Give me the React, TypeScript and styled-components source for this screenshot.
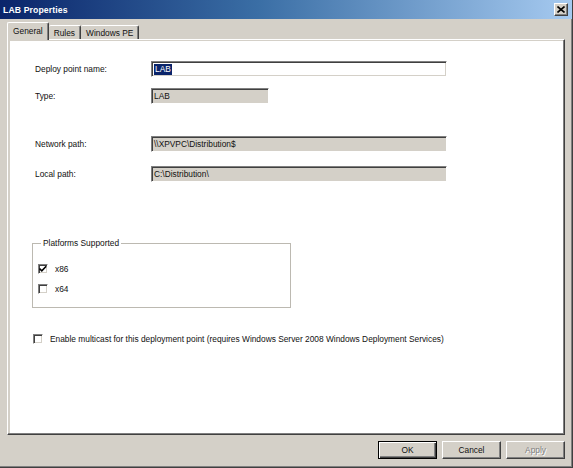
import React from "react";
import styled, { createGlobalStyle, css } from "styled-components";

const Global = createGlobalStyle`
  html, body { margin: 0; padding: 0; background: #D4D0C8; }
  body { font-family: "Liberation Sans", Arial, sans-serif; font-size: 8.35px; color: #111; }
  * { box-sizing: border-box; }
`;

const Window = styled.div`
  width: 573px;
  height: 468px;
  background: #D4D0C8;
  display: flex;
  flex-direction: column;
  border-right: 1px solid #404040;
  border-bottom: 1px solid #404040;
  box-shadow: inset -1px -1px 0 #808080;
`;

const TitleBar = styled.div`
  height: 19px;
  flex: none;
  display: flex;
  align-items: center;
  justify-content: space-between;
  padding: 0 4px 0 3px;
  background: linear-gradient(to right, #0A246A 0%, #3A6EA5 45%, #A6CAF0 100%);
`;

const Title = styled.span`
  color: #fff;
  font-weight: bold;
  font-size: 8.7px;
  letter-spacing: 0.1px;
`;

const raised = css`
  background: #D4D0C8;
  border-top: 1px solid #fff;
  border-left: 1px solid #fff;
  border-right: 1px solid #404040;
  border-bottom: 1px solid #404040;
  box-shadow: inset -1px -1px 0 #808080;
`;

const CloseButton = styled.div`
  ${raised};
  width: 14px;
  height: 13px;
  display: flex;
  align-items: center;
  justify-content: center;
`;

const TabStrip = styled.div`
  flex: none;
  height: 17px;
  margin-top: 3px;
  padding-left: 7px;
  display: flex;
  align-items: flex-end;
  position: relative;
  z-index: 1;
`;

const Tab = styled.div<{ $active?: boolean }>`
  background: #D4D0C8;
  border-top: 1px solid #fff;
  border-left: 1px solid #fff;
  border-right: 1px solid #404040;
  box-shadow: inset -1px 0 0 #808080;
  border-radius: 2px 2px 0 0;
  display: flex;
  align-items: center;
  padding: 0 5px;
  white-space: nowrap;
  height: ${(p) => (p.$active ? "18px" : "14px")};
  margin-bottom: ${(p) => (p.$active ? "-1px" : "0")};
  ${(p) =>
    p.$active
      ? css`
          padding: 0 5px 2px 5px;
        `
      : css`
          border-left: none;
        `}
`;

const Panel = styled.div`
  flex: 1;
  margin: 0 7px;
  background: #D4D0C8;
  border-top: 1px solid #fff;
  border-left: 1px solid #fff;
  border-right: 1px solid #404040;
  border-bottom: 1px solid #404040;
  box-shadow: inset -1px -1px 0 #808080;
  padding: 1px 1px 1px 2px;
  display: flex;
`;

const Page = styled.div`
  flex: 1;
  background: #fff;
  display: flex;
  flex-direction: column;
  padding: 20px 0 0 0;
`;

const FieldRow = styled.div<{ $gap: number }>`
  display: flex;
  align-items: center;
  height: 16px;
  margin-top: ${(p) => p.$gap}px;
  padding-left: 25px;
`;

const Label = styled.div`
  width: 116px;
  flex: none;
`;

const TextBox = styled.div<{ $width: number; $readOnly?: boolean }>`
  width: ${(p) => p.$width}px;
  height: 16px;
  background: ${(p) => (p.$readOnly ? "#D4D0C8" : "#fff")};
  border-top: 1px solid #808080;
  border-left: 1px solid #808080;
  border-bottom: 1px solid #fff;
  border-right: 1px solid #fff;
  box-shadow: inset 1px 1px 0 #404040, inset -1px -1px 0 #D4D0C8;
  display: flex;
  align-items: center;
  padding-left: 2px;
  white-space: nowrap;
`;

const Selected = styled.span`
  background: #0A246A;
  color: #fff;
  padding: 0 1px;
  line-height: 11px;
`;

const GroupBox = styled.fieldset`
  margin: 56px 0 0 22px;
  width: 259px;
  height: 70px;
  padding: 15px 0 0 5px;
  border: 1px solid #BCB9B1;
  display: flex;
  flex-direction: column;
  gap: 8px;
  min-width: 0;
`;

const Legend = styled.legend`
  line-height: 10px;
  padding: 0 2px;
  margin-left: 3px;
`;

const CheckRow = styled.label<{ $indent?: number; $gap?: number }>`
  display: flex;
  align-items: center;
  height: 12px;
  gap: 7px;
  margin-left: ${(p) => p.$indent ?? 0}px;
  margin-top: ${(p) => p.$gap ?? 0}px;
`;

const CheckBox = styled.span`
  width: 10px;
  height: 10px;
  flex: none;
  background: #fff;
  border-top: 1px solid #808080;
  border-left: 1px solid #808080;
  border-bottom: 1px solid #fff;
  border-right: 1px solid #fff;
  box-shadow: inset 1px 1px 0 #404040, inset -1px -1px 0 #D4D0C8;
  display: flex;
  align-items: center;
  justify-content: center;
`;

const ButtonBar = styled.div`
  flex: none;
  height: 32px;
  display: flex;
  justify-content: flex-end;
  align-items: flex-start;
  gap: 5px;
  padding: 6px 7px 0 0;
`;

const Button = styled.div<{ $default?: boolean; $disabled?: boolean }>`
  ${raised};
  width: 59px;
  height: 18px;
  display: flex;
  align-items: center;
  justify-content: center;
  color: ${(p) => (p.$disabled ? "#808080" : "#111")};
  text-shadow: ${(p) => (p.$disabled ? "1px 1px 0 #fff" : "none")};
  ${(p) =>
    p.$default &&
    css`
      border: 1px solid #000;
      box-shadow: inset 1px 1px 0 #fff, inset -1px -1px 0 #404040,
        inset -2px -2px 0 #808080;
    `}
`;

const Check = () => (
  <svg width="8" height="8" viewBox="0 0 8 8">
    <path d="M0.5 3.5 L2.8 5.8 L7.2 1.2" fill="none" stroke="#000" strokeWidth="1.6" />
  </svg>
);

export default function App() {
  return (
    <>
      <Global />
      <Window>
        <TitleBar>
          <Title>LAB Properties</Title>
          <CloseButton>
            <svg width="8" height="7" viewBox="0 0 8 7">
              <path d="M0.5 0.5 L7.5 6.5 M7.5 0.5 L0.5 6.5" stroke="#000" strokeWidth="1.6" />
            </svg>
          </CloseButton>
        </TitleBar>
        <TabStrip>
          <Tab $active>General</Tab>
          <Tab>Rules</Tab>
          <Tab>Windows PE</Tab>
        </TabStrip>
        <Panel>
          <Page>
            <FieldRow $gap={0}>
              <Label>Deploy point name:</Label>
              <TextBox $width={296}>
                <Selected>LAB</Selected>
              </TextBox>
            </FieldRow>
            <FieldRow $gap={11}>
              <Label>Type:</Label>
              <TextBox $width={118} $readOnly>
                LAB
              </TextBox>
            </FieldRow>
            <FieldRow $gap={32}>
              <Label>Network path:</Label>
              <TextBox $width={296} $readOnly>
                \\XPVPC\Distribution$
              </TextBox>
            </FieldRow>
            <FieldRow $gap={14}>
              <Label>Local path:</Label>
              <TextBox $width={296} $readOnly>
                C:\Distribution\
              </TextBox>
            </FieldRow>
            <GroupBox>
              <Legend>Platforms Supported</Legend>
              <CheckRow>
                <CheckBox>
                  <Check />
                </CheckBox>
                x86
              </CheckRow>
              <CheckRow>
                <CheckBox />
                x64
              </CheckRow>
            </GroupBox>
            <CheckRow $indent={23} $gap={25}>
              <CheckBox />
              Enable multicast for this deployment point (requires Windows Server 2008 Windows
              Deployment Services)
            </CheckRow>
          </Page>
        </Panel>
        <ButtonBar>
          <Button $default>OK</Button>
          <Button>Cancel</Button>
          <Button $disabled>Apply</Button>
        </ButtonBar>
      </Window>
    </>
  );
}
